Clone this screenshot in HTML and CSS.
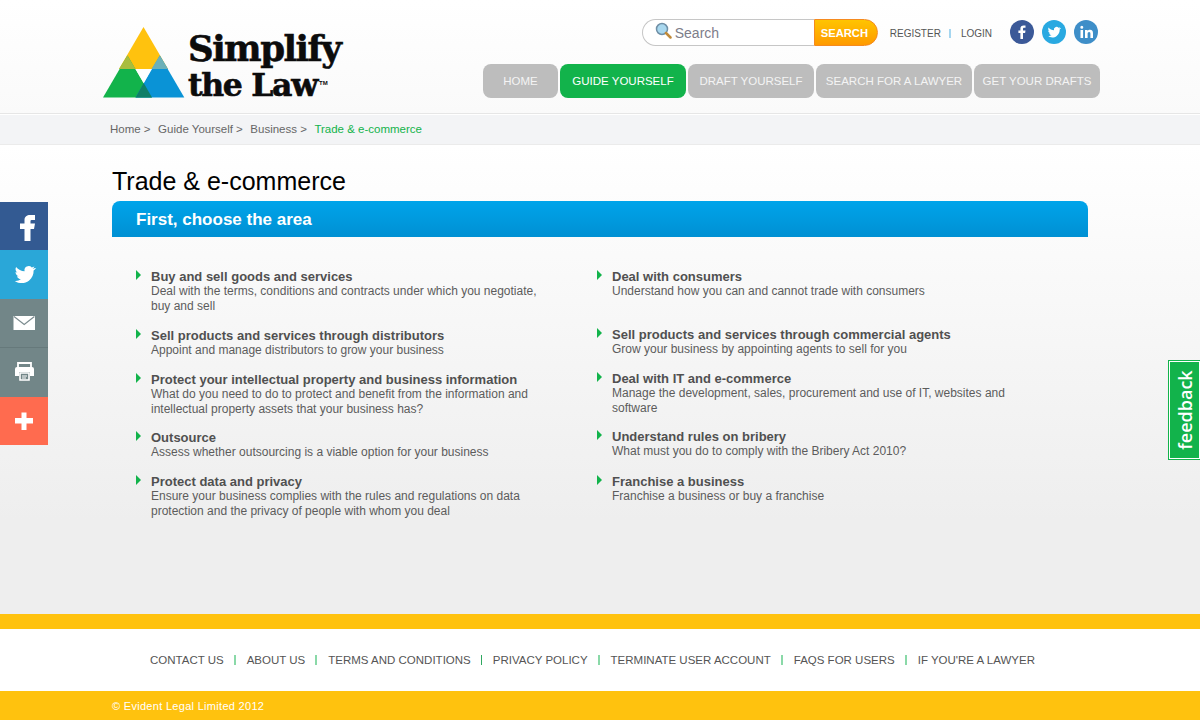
FILE: index.html
```html
<!DOCTYPE html>
<html lang="en">
<head>
<meta charset="utf-8">
<title>Trade &amp; e-commerce - Simplify the Law</title>
<link rel="stylesheet" href="styles.css">
</head>
<body>
<header class="header">
  <div class="header-inner">
    <a class="logo">
      <svg class="logo-mark" width="83" height="72" viewBox="0 0 83 72">
        <polygon points="41.500,0 66,42 17,42" fill="#ffc20e"/>
        <polygon points="25.500,28.500 50,70.500 1,70.500" fill="#12b34b"/>
        <polygon points="57.800,28.500 82.300,70.500 33.500,70.500" fill="#0a93d6"/>
        <polygon points="25.500,28.500 33.500,42 17,42" fill="#a9bd3f"/>
        <polygon points="57.800,28.500 66,42 49.500,42" fill="#6cb0b8"/>
        <polygon points="33.500,42 49.500,42 41.700,56" fill="#fff"/>
        <polygon points="41.700,56 50,70.500 33.500,70.500" fill="#0f7f66"/>
      </svg>
      <span class="logo-text"><span class="logo-line line-one">Simplify</span><span class="logo-line line-two">the Law<sup class="tm">TM</sup></span></span>
    </a>
    <div class="header-right">
      <div class="utility">
        <form class="search">
          <span class="search-field">
            <svg class="search-icon" width="17" height="17" viewBox="0 0 17 17"><circle cx="7" cy="7" r="5.500" fill="#a9d8ef" stroke="#6f8fa6" stroke-width="1.500"/><path d="M11 11l4.500 4.500" stroke="#c08a3a" stroke-width="2.500" stroke-linecap="round"/></svg>
            <span class="search-placeholder">Search</span>
          </span>
          <span class="search-button">SEARCH</span>
        </form>
        <nav class="account"><a>REGISTER</a><i class="pipe"></i><a>LOGIN</a></nav>
        <div class="social-top">
          <a class="round fb"><svg width="24" height="24" viewBox="0 0 24 24"><path d="M13 19v-6h2.100l.4-2.500H13V9c0-.8.300-1.200 1.200-1.200h1.300V5.500c-.4 0-1.100-.1-1.900-.1-2 0-3.200 1.100-3.200 3.300v1.800H8.400V13h2v6z" fill="#fff"/></svg></a>
          <a class="round tw"><svg width="24" height="24" viewBox="0 0 24 24"><path d="M18.500 8.100c-.5.200-1 .4-1.500.4.500-.3 1-.8 1.200-1.400-.5.300-1.100.5-1.700.7a2.600 2.600 0 0 0-4.500 2.400c-2.200-.1-4.100-1.100-5.400-2.800-.7 1.200-.4 2.700.8 3.500-.4 0-.8-.1-1.200-.3 0 1.300.9 2.400 2.100 2.600-.4.100-.8.100-1.200 0 .3 1 1.300 1.800 2.500 1.800a5.300 5.300 0 0 1-3.900 1.100c3 1.900 6.500 1.900 9-.1 2.100-1.700 3.100-4.200 3-6.500.6-.4 1-.9 1.300-1.400z" fill="#fff"/></svg></a>
          <a class="round li"><svg width="24" height="24" viewBox="0 0 24 24"><path d="M6.500 10h2.600v8H6.500zM7.800 5.800a1.500 1.500 0 1 1 0 3 1.500 1.500 0 0 1 0-3zM11 10h2.500v1.100c.5-.8 1.400-1.300 2.500-1.300 2.200 0 3 1.400 3 3.600V18h-2.600v-4.100c0-1-.3-1.800-1.300-1.800s-1.500.8-1.500 1.800V18H11z" fill="#fff"/></svg></a>
        </div>
      </div>
      <nav class="main-nav">
        <a class="tab tab-home">HOME</a>
        <a class="tab tab-guide active">GUIDE YOURSELF</a>
        <a class="tab tab-draft">DRAFT YOURSELF</a>
        <a class="tab tab-lawyer">SEARCH FOR A LAWYER</a>
        <a class="tab tab-get">GET YOUR DRAFTS</a>
      </nav>
    </div>
  </div>
</header>

<div class="crumbs">
  <div class="crumbs-inner">
    <a>Home &gt;</a><a>Guide Yourself &gt;</a><a>Business &gt;</a><a class="current">Trade &amp; e-commerce</a>
  </div>
</div>

<main class="main">
  <div class="content">
    <h1 class="page-title">Trade &amp; e-commerce</h1>
    <h2 class="band">First, choose the area</h2>
    <div class="columns">
      <ul class="col col-left">
        <li class="item"><h3>Buy and sell goods and services</h3><p>Deal with the terms, conditions and contracts under which you negotiate, buy and sell</p></li>
        <li class="item"><h3>Sell products and services through distributors</h3><p>Appoint and manage distributors to grow your business</p></li>
        <li class="item item-tight"><h3>Protect your intellectual property and business information</h3><p>What do you need to do to protect and benefit from the information and intellectual property assets that your business has?</p></li>
        <li class="item"><h3>Outsource</h3><p>Assess whether outsourcing is a viable option for your business</p></li>
        <li class="item"><h3>Protect data and privacy</h3><p>Ensure your business complies with the rules and regulations on data protection and the privacy of people with whom you deal</p></li>
      </ul>
      <ul class="col col-right">
        <li class="item item-first"><h3>Deal with consumers</h3><p>Understand how you can and cannot trade with consumers</p></li>
        <li class="item"><h3>Sell products and services through commercial agents</h3><p>Grow your business by appointing agents to sell for you</p></li>
        <li class="item item-tight"><h3>Deal with IT and e-commerce</h3><p>Manage the development, sales, procurement and use of IT, websites and software</p></li>
        <li class="item item-bribery"><h3>Understand rules on bribery</h3><p>What must you do to comply with the Bribery Act 2010?</p></li>
        <li class="item"><h3>Franchise a business</h3><p>Franchise a business or buy a franchise</p></li>
      </ul>
    </div>
  </div>
</main>

<footer class="footer">
  <div class="footer-band"></div>
  <nav class="footer-nav">
    <a>CONTACT US</a><i></i><a>ABOUT US</a><i></i><a>TERMS AND CONDITIONS</a><i class="dark"></i><a>PRIVACY POLICY</a><i></i><a>TERMINATE USER ACCOUNT</a><i></i><a>FAQS FOR USERS</a><i></i><a>IF YOU'RE A LAWYER</a>
  </nav>
  <div class="copyright"><span>© Evident Legal Limited 2012</span></div>
</footer>

<aside class="share">
  <a class="share-btn s-fb"><svg width="48" height="48" viewBox="0 0 48 48"><path d="M24.500 39V27H20v-5.500h4.500V18c0-3.500 2.500-5 5.500-5h5v5h-3.500c-1 0-1 .8-1 1.500v2H35L34 27h-3.500v12z" fill="#fff"/></svg></a>
  <a class="share-btn s-tw"><svg width="48" height="48" viewBox="0 0 48 48"><path d="M35 18c-.8.400-1.600.6-2.400.7.900-.5 1.500-1.300 1.800-2.300-.8.500-1.700.8-2.600 1a4.200 4.200 0 0 0-7.200 3.800c-3.400-.2-6.400-1.800-8.500-4.300-1.100 1.900-.6 4.400 1.300 5.600-.7 0-1.300-.2-1.900-.5 0 2 1.400 3.800 3.400 4.200-.6.200-1.300.2-1.900.1.500 1.700 2.100 2.900 3.900 2.900a8.400 8.400 0 0 1-6.200 1.700c4.700 3 10.300 2.900 14.200-.2 3.300-2.600 4.900-6.600 4.700-10.200.9-.6 1.700-1.400 2.400-2.500z" fill="#fff"/></svg></a>
  <a class="share-btn s-mail"><svg width="48" height="48" viewBox="0 0 48 48"><rect x="13.500" y="17" width="21.500" height="14" fill="#fff"/><path d="M14 17.500l10.200 8 10.200-8" fill="none" stroke="#7c8c8f" stroke-width="1.200"/></svg></a>
  <a class="share-btn s-print"><svg width="48" height="48" viewBox="0 0 48 48"><path d="M18 15h13v5H18z" fill="none" stroke="#fff" stroke-width="1.800"/><path d="M17 19h15a2 2 0 0 1 2 2v7h-4v-4H19v4h-4v-7a2 2 0 0 1 2-2z" fill="#fff"/><path d="M20 25h9v7h-9z" fill="none" stroke="#fff" stroke-width="1.600"/><path d="M22 28h5M22 30h4" stroke="#fff"/></svg></a>
  <a class="share-btn s-plus"><svg width="48" height="48" viewBox="0 0 48 48"><path d="M15 21h6.500v-5.500h5V21H33v5.500h-6.500V33h-5v-6.500H15z" fill="#fff"/></svg></a>
</aside>

<a class="feedback"><span>feedback</span></a>
</body>
</html>
```
FILE: styles.css
```css
* { box-sizing: border-box; }
html, body { margin: 0; padding: 0; }
body {
  width: 1200px;
  height: 720px;
  overflow: hidden;
  position: relative;
  font-family: "Liberation Sans", Arial, sans-serif;
  color: #555;
  background: #fff;
}
a { color: inherit; text-decoration: none; }
ul { list-style: none; margin: 0; padding: 0; }
h1, h2, h3, p { margin: 0; font-weight: normal; }

/* header */
.header {
  height: 114px;
  background: linear-gradient(#fff, #fafafa);
  border-bottom: 1px solid #e6e6e6;
}
.header-inner {
  width: 1000px;
  margin-left: 100px;
  display: flex;
  justify-content: space-between;
}
.logo { display: flex; align-items: flex-start; padding: 27px 0 0 2px; }
.logo-mark { display: block; flex: none; }
.logo-text {
  display: block;
  margin: 5px 0 0 3px;
  font-family: "DejaVu Serif", serif;
  font-weight: bold;
  color: #0c0c0c;
  -webkit-text-stroke: .6px #0c0c0c;
}
.logo-line { display: block; white-space: nowrap; line-height: 34px; }
.line-one { font-size: 35.500px; letter-spacing: -1.500px; height: 36px; }
.line-two { font-size: 31.500px; letter-spacing: -1.300px; height: 34px; }
.tm { font-size: 6px; font-family: "Liberation Sans", sans-serif; letter-spacing: 0; vertical-align: 11px; line-height: 0; margin-left: 2px; -webkit-text-stroke: 0; }

.header-right { width: 617px; display: flex; flex-direction: column; align-items: flex-end; }
.utility { display: flex; align-items: center; height: 64px; padding: 0 2px 0 0; width: 100%; justify-content: flex-end; }
.search { display: flex; height: 27px; }
.search-field {
  width: 172px;
  border: 1px solid #c6c6c6;
  border-right: 0;
  border-radius: 14px 0 0 14px;
  background: #fff;
  display: flex;
  align-items: center;
  padding-left: 12px;
}
.search-icon { margin-top: -3px; }
.search-placeholder { margin-left: 3px; padding-top: 2px; font-size: 14px; color: #7d7d8a; }
.search-button {
  width: 64px;
  border: 1px solid #f58a1f;
  border-radius: 0 14px 14px 0;
  background: linear-gradient(#ffc400, #ff9a00);
  color: #fff;
  font-size: 11.200px;
  font-weight: bold;
  line-height: 27px;
  padding-left: 6px;
}
.account { display: flex; align-items: center; margin-left: 12px; font-size: 10px; color: #555; margin-top: 2px; }
.pipe { width: 2px; height: 9px; background: #a5d6f0; margin: 0 10px 0 8px; }
.social-top { display: flex; gap: 8px; margin-left: 18px; margin-top: -1px; }
.round { width: 24px; height: 24px; border-radius: 50%; display: block; }
.round svg { display: block; }
.fb { background: #3b5998; }
.tw { background: #29a9e1; }
.li { background: #3e8ec8; }

.main-nav { display: flex; gap: 2px; }
.tab {
  height: 34px;
  border-radius: 8px;
  background: #bdbdbd;
  color: #f4f4f4;
  font-size: 11.500px;
  line-height: 34px;
  text-align: center;
  white-space: nowrap;
}
.tab-home { width: 75px; }
.tab-guide { width: 126px; }
.tab-draft { width: 126px; }
.tab-lawyer { width: 156px; }
.tab-get { width: 126px; }
.active { background: #12b34b; color: #fff; }

/* breadcrumb */
.crumbs {
  height: 31px;
  background: #f3f4f6;
  border-top: 1px solid #fff;
  border-bottom: 1px solid #ebebeb;
}
.crumbs-inner {
  margin-left: 110px;
  display: flex;
  gap: 7.500px;
  font-size: 11.500px;
  line-height: 29px;
  color: #666;
}
.current { color: #12b34b; }

/* main */
.main {
  height: 469px;
  background: linear-gradient(#fff 0, #eee 80%);
}
.content { width: 976px; margin-left: 112px; padding-top: 20px; }
.page-title { font-size: 25px; line-height: 32px; margin-bottom: 4px; color: #000; }
.band {
  height: 36px;
  border-radius: 8px 8px 0 0;
  background: linear-gradient(#00a4ea, #0090d3);
  color: #fff;
  font-size: 17px;
  font-weight: bold;
  line-height: 37px;
  padding-left: 24px;
}
.columns { display: flex; padding: 32px 0 0 24px; }
.col { width: 461px; }
.item {
  position: relative;
  padding: 0 0 14px 15px;
  width: 420px;
  font-size: 12px;
  line-height: 15px;
}
.item::before {
  content: "";
  position: absolute;
  left: 0;
  top: 1px;
  border-left: 5px solid #12b34b;
  border-top: 5px solid transparent;
  border-bottom: 5px solid transparent;
}
.item h3 { font-size: 13px; font-weight: bold; line-height: 15px; color: #505050; }
.item p { color: #5c5c5c; }
.item-first { padding-bottom: 28px; }
.item-tight { padding-bottom: 13px; }
.item-bribery { padding-bottom: 15px; }

/* footer */
.footer-band { height: 15px; background: #ffc20e; }
.footer-nav {
  height: 62px;
  background: #fff;
  display: flex;
  align-items: center;
  padding-left: 150px;
  font-size: 11.500px;
  color: #555;
}
.footer-nav i { width: 2px; height: 10px; background: #8ad9a8; margin: 0 11px 0 10px; }
.footer-nav i.dark { width: 1px; background: #2fa860; }
.copyright {
  height: 29px;
  background: #ffc20e;
  color: #fff;
  font-size: 11px;
  line-height: 31px;
  letter-spacing: .3px;
  padding-left: 112px;
}

/* overlays */
.share { position: absolute; left: 0; top: 202px; width: 48px; }
.share-btn { display: block; height: 48px; }
.share-btn svg { display: block; }
.s-fb { background: #335a92; }
.s-tw { background: #2aa7d8; height: 49px; }
.s-mail { background: #728688; border-bottom: 1px solid #66797b; height: 49px; }
.s-print { background: #728688; height: 49px; }
.s-plus { background: #ff6b4f; }

.feedback {
  position: absolute;
  right: 0;
  top: 360px;
  width: 32px;
  height: 100px;
  background: #12b34b;
  border: 1px solid #12b34b;
  box-shadow: inset 0 0 0 1px #fff;
  border-right: 0;
  color: #fff;
  display: flex;
  align-items: center;
  justify-content: center;
}
.feedback span {
  display: block;
  transform: rotate(-90deg);
  font-family: "Open Sans", sans-serif;
  font-weight: 600;
  font-size: 18px;
  white-space: nowrap;
}
```
